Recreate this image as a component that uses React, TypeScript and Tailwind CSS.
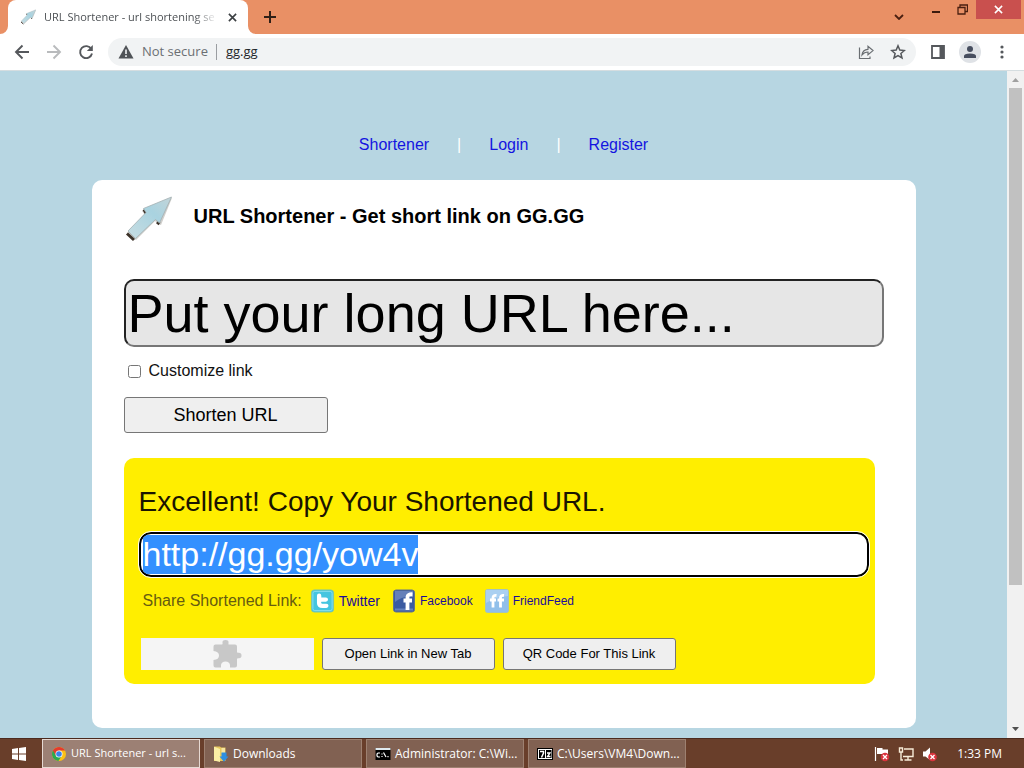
import { useEffect, useRef, type ReactNode } from "react";

function ArrowLogo({ className }: { className: string }) {
  return (
    <svg viewBox="0 0 48 46" className={className} aria-hidden="true">
      <defs>
        <linearGradient id="arrowFill" x1="0" y1="1" x2="1" y2="0">
          <stop offset="0" stopColor="#c8dde2" />
          <stop offset="0.6" stopColor="#a9d3e0" />
          <stop offset="1" stopColor="#c3d4d8" />
        </linearGradient>
      </defs>
      <path d="M3 37 L21 19 L18 15 L20 13 L48 2 L37 29 L34 28 L31 25 L12 44 Z" fill="#8a8780" opacity="0.4" />
      <path d="M3 37.500 L10 44 M20 13.500 L22.500 18 M33 26 L35.500 28" stroke="#3c3229" strokeWidth="3" fill="none" />
      <path d="M4 35 L22 16.500 L19.500 12.500 L47.500 1 L35.500 27 L31.500 23.500 L11.500 42.500 Z" fill="url(#arrowFill)" stroke="#a3b0b2" strokeWidth="0.8" />
    </svg>
  );
}

function ChromeLogo() {
  return (
    <svg viewBox="0 0 16 16" className="size-4 shrink-0" aria-hidden="true">
      <circle cx="8" cy="8" r="7" fill="#fbc116" />
      <path d="M1.940 4.500 A7 7 0 0 0 7.400 14.970 L10.900 9.700 L8 8 Z" fill="#2da94f" />
      <path d="M1.940 4.500 A7 7 0 0 1 14.060 4.500 H8 L5 9.700 Z" fill="#e33b2e" />
      <circle cx="8" cy="8" r="3.500" fill="#fff" />
      <circle cx="8" cy="8" r="2.800" fill="#3c82e8" />
    </svg>
  );
}

function FolderIcon() {
  return (
    <svg viewBox="0 0 16 16" className="size-4 shrink-0" aria-hidden="true">
      <path d="M1 0.500 H7 L8 1.500 H12.500 V15 H1 Z" fill="#e8c85c" />
      <path d="M2 1 L7 3 V16 L1 14.500 V1 Z" fill="#fbeea5" />
      <path d="M8.500 2 H12 V7 H8.500 Z" fill="#f7e6a0" />
      <path d="M8.500 6.500 H13.500 V10.500 H15.500 L11 15.800 L6.500 10.500 H8.500 Z" fill="#2d8fe0" />
    </svg>
  );
}

function ConsoleIcon() {
  return (
    <svg viewBox="0 0 16 16" className="size-4 shrink-0" aria-hidden="true">
      <rect x="0.500" y="2" width="15" height="12" fill="#000" />
      <rect x="0.500" y="2" width="15" height="2" fill="#dfe9ee" />
      <path d="M5 7 H3 L2 8 V10 L3 11 H5 M7 7.500 V8.500 M7 10 V11 M8.500 6.500 L11 11 M13 10 V11.200" stroke="#fff" strokeWidth="1.200" fill="none" />
    </svg>
  );
}

function SevenZipIcon() {
  return (
    <svg viewBox="0 0 16 16" className="size-4 shrink-0" aria-hidden="true">
      <rect x="0.500" y="2.500" width="15" height="11" fill="#fff" stroke="#000" />
      <path d="M2 4 H8 V12 H2 Z M9 4 H14.500 V12 H9 Z" fill="#000" />
      <path d="M3 5.500 H6.500 V7 L4.500 11.500" stroke="#fff" strokeWidth="1.500" fill="none" />
      <path d="M10 7 H13 L10.500 10.500 H13.500" stroke="#fff" strokeWidth="1.300" fill="none" />
    </svg>
  );
}

function TabStrip() {
  return (
    <header className="flex h-[34px] items-end bg-[#e99065] pl-2">
      <div className="relative flex h-full w-60 items-center rounded-t-lg bg-white pr-2 pl-3">
        <svg viewBox="0 0 8 8" className="absolute bottom-0 -left-2 size-2" aria-hidden="true">
          <path d="M8 0 V8 H0 A8 8 0 0 0 8 0" fill="#fff" />
        </svg>
        <svg viewBox="0 0 8 8" className="absolute -right-2 bottom-0 size-2" aria-hidden="true">
          <path d="M0 0 V8 H8 A8 8 0 0 1 0 0" fill="#fff" />
        </svg>
        <ArrowLogo className="size-4" />
        <span className="ml-2 bg-linear-to-r from-[#45494d] from-88% to-[#45494d]/10 bg-clip-text text-[11px] whitespace-nowrap text-transparent">
          URL Shortener - url shortening se
        </span>
        <button aria-label="Close tab" className="ml-auto flex size-4 items-center justify-center">
          <svg viewBox="0 0 10 10" className="size-[9px]"><path d="M1 1 L9 9 M9 1 L1 9" stroke="#3c4043" strokeWidth="1.800" /></svg>
        </button>
      </div>
      <button aria-label="New tab" className="ml-3 flex size-5 items-center justify-center self-center">
        <svg viewBox="0 0 12 12" className="size-3"><path d="M6 0 V12 M0 6 H12" stroke="#2f1f17" strokeWidth="2" /></svg>
      </button>
      <div className="ml-auto flex h-full items-start pr-[3px]">
        <button aria-label="Search tabs" className="mr-2 flex h-full w-8 items-center justify-center">
          <svg viewBox="0 0 10 6" className="h-1.5 w-2.5"><path d="M1 1 L5 5 L9 1" stroke="#4a1f10" strokeWidth="1.800" fill="none" /></svg>
        </button>
        <button aria-label="Minimize" className="flex h-5 w-[26px] justify-center pt-[11px]">
          <span className="h-0.5 w-2 bg-[#3b1b0e]" />
        </button>
        <button aria-label="Restore" className="mr-px flex h-[18px] w-[26px] items-center justify-center">
          <svg viewBox="0 0 11 11" className="size-[11px]"><path d="M1 3.500 H8 V10 H1 Z M3 3 V1 H10.500 V7.500 H8.500" stroke="#4a1f10" strokeWidth="1.300" fill="none" /></svg>
        </button>
        <button aria-label="Close" className="flex h-[19px] w-[45px] items-center justify-center bg-[#c9504e]">
          <svg viewBox="0 0 10 10" className="size-[9px]"><path d="M1 1 L9 9 M9 1 L1 9" stroke="#fff" strokeWidth="1.700" /></svg>
        </button>
      </div>
    </header>
  );
}

function Toolbar() {
  return (
    <div className="flex h-[37px] items-center border-b border-[#d5dde0] bg-white pr-3.5 pl-3.5 text-[#55585c]">
      <button aria-label="Back" className="size-4">
        <svg viewBox="0 0 16 16"><path d="M15 8 H2 M8.500 1.500 L2 8 L8.500 14.500" stroke="#55585c" strokeWidth="1.900" fill="none" /></svg>
      </button>
      <button aria-label="Forward" className="ml-4 size-4">
        <svg viewBox="0 0 16 16"><path d="M1 8 H14 M7.500 1.500 L14 8 L7.500 14.500" stroke="#b9bbbd" strokeWidth="1.900" fill="none" /></svg>
      </button>
      <button aria-label="Reload" className="mr-3.5 ml-4 size-4">
        <svg viewBox="0 0 16 16"><path d="M13.300 5 A6 6 0 1 0 14 9.500" stroke="#55585c" strokeWidth="1.900" fill="none" /><path d="M14.800 1 V7 H8.800 Z" fill="#55585c" /></svg>
      </button>
      <div className="flex h-7 min-w-0 flex-1 items-center rounded-full bg-[#f1f3f4] pr-2.5 pl-2.5 text-[13px]">
        <svg viewBox="0 0 16 16" className="size-4 shrink-0" aria-hidden="true"><path d="M8 1 L15.500 14.500 H0.500 Z" fill="#4f5357" /><path d="M8 5.500 V10 M8 11.200 V13" stroke="#f1f3f4" strokeWidth="1.600" /></svg>
        <span className="ml-2 whitespace-nowrap text-[#6b6f73]">Not secure</span>
        <span className="mr-[9px] ml-2 h-4 w-px bg-[#9a9da1]" />
        <input aria-label="Address" defaultValue="gg.gg" className="min-w-0 flex-1 bg-transparent text-[#24272a] outline-none" />
        <button aria-label="Share page" className="mr-4 size-4">
          <svg viewBox="0 0 16 16"><path d="M1.500 3.500 V14.500 H12 V12.500 M4 11 C4.300 7.500 6.500 5.500 10 5.300 V2.300 L15 6.600 L10 10.700 V8 C7.500 8 5.500 9 4 11 Z" stroke="#6a6e72" strokeWidth="1.200" fill="none" /></svg>
        </button>
        <button aria-label="Bookmark" className="size-4">
          <svg viewBox="0 0 16 16"><path d="M8 1.800 L9.800 6.100 L14.400 6.500 L10.900 9.500 L12 14 L8 11.600 L4 14 L5.100 9.500 L1.600 6.500 L6.200 6.100 Z" stroke="#55585c" strokeWidth="1.500" fill="none" /></svg>
        </button>
      </div>
      <button aria-label="Side panel" className="ml-3.5 size-4">
        <svg viewBox="0 0 16 16"><path d="M2 2 H14 V14 H2 Z" stroke="#55585c" strokeWidth="1.800" fill="none" /><path d="M9.500 2 H14 V14 H9.500 Z" fill="#55585c" /></svg>
      </button>
      <button aria-label="Profile" className="ml-[13px] size-[22px] rounded-full bg-[#dfe2e6] p-[3px]">
        <svg viewBox="0 0 16 16"><circle cx="8" cy="5" r="3" fill="#474e5f" /><path d="M2 14 V12 Q2 9.500 8 9.500 Q14 9.500 14 12 V14 Z" fill="#474e5f" /></svg>
      </button>
      <button aria-label="Menu" className="ml-[13px] size-4">
        <svg viewBox="0 0 16 16" fill="#55585c"><circle cx="8" cy="3" r="1.600" /><circle cx="8" cy="8" r="1.600" /><circle cx="8" cy="13" r="1.600" /></svg>
      </button>
    </div>
  );
}

function ShareLink({ label, icon, small }: { label: string; icon: ReactNode; small?: boolean }) {
  return (
    <a href="#share" className={small ? "flex items-center gap-1 text-[12px] text-[#1b0b9a]" : "flex items-center gap-1 text-[14px] text-[#1b0b9a]"}>
      {icon}
      {label}
    </a>
  );
}

function ShortLinkPanel() {
  const shortUrl = useRef<HTMLInputElement>(null);
  useEffect(() => {
    shortUrl.current?.focus();
    shortUrl.current?.select();
  }, []);

  return (
    <section className="mt-[25px] mr-[9px] rounded-[10px] bg-[#ffee00] pt-6 pr-1.5 pb-3.5 pl-[15px]">
      <h2 className="text-[28px] leading-10 text-[#1a1400]">Excellent! Copy Your Shortened URL.</h2>
      <input
        ref={shortUrl}
        aria-label="Shortened URL"
        readOnly
        defaultValue="http://gg.gg/yow4v"
        className="mt-2.5 block h-[45px] w-full rounded-[12px] border-2 border-black bg-white px-0.5 text-[34px] leading-[39px] text-black outline-1 outline-white selection:bg-[#3390ff] selection:text-white"
      />
      <div className="mt-3 flex h-6 items-center pl-1">
        <span className="text-[16px] whitespace-nowrap text-[#665c10]">Share Shortened Link:</span>
        <div className="ml-2 flex items-center gap-3">
          <ShareLink
            label="Twitter"
            icon={
              <svg viewBox="0 0 26 26" className="h-[26px] w-[25px]" aria-hidden="true">
                <rect x="1.500" y="1.500" width="23" height="23" rx="3" fill="#45c5e0" stroke="#7fc6a4" />
                <rect x="3" y="3" width="20" height="20" rx="2" fill="none" stroke="#8be0ee" />
                <path d="M9.500 7.500 V15 Q9.500 18 13 18 H17 M10 11.500 H16.500" stroke="#fff" strokeWidth="4.500" strokeLinecap="round" fill="none" />
                <path d="M12 14.700 H19" stroke="#45c5e0" strokeWidth="1" />
              </svg>
            }
          />
          <ShareLink
            small
            label="Facebook"
            icon={
              <svg viewBox="0 0 24 26" className="h-[26px] w-6" aria-hidden="true">
                <rect x="1.500" y="2" width="21" height="22" rx="2.500" fill="#3b5ba1" stroke="#62738a" />
                <path d="M3 3 H21 V9 Q10 8 3 14 Z" fill="#6580b9" />
                <path d="M3 21.500 H21" stroke="#7f9bd0" strokeWidth="2" opacity="0.6" />
                <path d="M15.500 22 V9 Q15.500 6 20.500 6.300 M11.500 12.500 H20" stroke="#fff" strokeWidth="3.800" fill="none" />
              </svg>
            }
          />
          <ShareLink
            small
            label="FriendFeed"
            icon={
              <svg viewBox="0 0 24 26" className="h-[26px] w-6" aria-hidden="true">
                <rect x="0.500" y="1.500" width="23" height="23" rx="2" fill="#90bfea" stroke="#a4c4bd" />
                <path d="M1 2 H23 V8 Q10 9 1 15 Z" fill="#aad0f1" />
                <path d="M8 19.500 V10 Q8 7 11.500 7.500 M5 12 H11 M15.500 19.500 V10 Q15.500 7 19 7.500 M12.500 12 H19" stroke="#fff" strokeWidth="2.800" fill="none" />
              </svg>
            }
          />
        </div>
      </div>
      <div className="mt-[25px] flex gap-2 pl-0.5 text-[13px] text-black">
        <div className="flex h-8 w-[173px] items-center justify-center bg-[#f5f5f5]">
          <svg viewBox="0 0 29 28" className="h-7 w-[29px]" role="img" aria-label="Plugin unavailable">
            <path d="M0.500 6.500 Q0.500 4.500 2.500 4.500 H9 Q10 4 9.500 3 Q9 0 12.500 0 Q16 0 15.500 3 Q15 4.500 16 4.500 H22 Q24 4.500 24 6.500 V12 Q24 13 25.500 12.700 Q28.500 12.500 28.500 15.500 Q28.500 18.500 25.500 18.200 Q24 18 24 19 V25.500 Q24 27.500 22 27.500 H17 V25 Q16.500 21.500 12.500 21.500 Q8.500 21.500 8 25 V27.500 H2.500 Q0.500 27.500 0.500 25.500 V20 Q6 19.500 6 15.500 Q6 11.500 0.500 11 Z" fill="#c8c8c8" />
          </svg>
        </div>
        <button className="h-8 w-[173px] rounded-[3px] border border-[#767676] bg-[#efefef]">Open Link in New Tab</button>
        <button className="h-8 w-[173px] rounded-[3px] border border-[#767676] bg-[#efefef]">QR Code For This Link</button>
      </div>
    </section>
  );
}

function Page() {
  return (
    <main className="min-w-0 flex-1 bg-[#b7d6e2] px-10 pt-16 pb-2.5 font-['Liberation_Sans',Arial,sans-serif]">
      <nav className="flex justify-center gap-7 text-[16px] leading-5 text-[#1414e0]">
        <a href="#shortener">Shortener</a>
        <span className="text-white">|</span>
        <a href="#login">Login</a>
        <span className="text-white">|</span>
        <a href="#register">Register</a>
      </nav>
      <div className="mx-auto mt-[25px] max-w-[824px] rounded-[10px] bg-white px-8 pt-4 pb-11">
        <div className="flex h-[46px] items-center gap-[22px]">
          <ArrowLogo className="h-[46px] w-12" />
          <h1 className="pb-1.5 text-[20px] font-bold text-black">URL Shortener - Get short link on GG.GG</h1>
        </div>
        <input
          aria-label="Long URL"
          defaultValue="Put your long URL here..."
          className="mt-[37px] block h-[68px] w-full rounded-[10px] border-2 border-t-[#222] border-r-[#767676] border-b-[#767676] border-l-[#222] bg-[#e6e6e6] px-0.5 text-[54px] leading-[62px] text-black"
        />
        <label className="mt-3.5 ml-1 flex h-5 w-fit items-center gap-2 text-[16px] text-[#111]">
          <input type="checkbox" className="size-[13px]" />
          Customize link
        </label>
        <button className="mt-4 block h-9 w-[204px] rounded-[3px] border border-[#767676] bg-[#efefef] text-[18px] text-black">
          Shorten URL
        </button>
        <ShortLinkPanel />
      </div>
    </main>
  );
}

function Scrollbar() {
  return (
    <div className="flex w-[17px] flex-col items-center bg-[#f1f1f1]" aria-hidden="true">
      <svg viewBox="0 0 17 17" className="size-[17px] shrink-0"><path d="M5 11 L8.500 7 L12 11 Z" fill="#a0a0a0" /></svg>
      <div className="flex w-[13px] flex-1 flex-col">
        <div className="h-[78.5%] bg-[#c1c1c1]" />
      </div>
      <svg viewBox="0 0 17 17" className="size-[17px] shrink-0"><path d="M5 6 L8.500 10 L12 6 Z" fill="#505050" /></svg>
    </div>
  );
}

const tasks = [
  { label: "URL Shortener - url s...", icon: <ChromeLogo />, active: true },
  { label: "Downloads", icon: <FolderIcon />, active: false },
  { label: "Administrator: C:\\Wi...", icon: <ConsoleIcon />, active: false },
  { label: "C:\\Users\\VM4\\Down...", icon: <SevenZipIcon />, active: false },
];

function Taskbar() {
  return (
    <footer className="flex h-[30px] items-center border-t border-[#4b2a1e] bg-[#693e2a] text-[12px] text-white">
      <button aria-label="Start" className="flex h-full w-[42px] items-center pl-3">
        <svg viewBox="0 0 14 14" className="size-3.5"><path d="M0 2 L6 1 V6.500 H0 Z M7 0.900 L14 0 V6.500 H7 Z M0 7.500 H6 V13 L0 12 Z M7 7.500 H14 V14 L7 13.100 Z" fill="#fff" /></svg>
      </button>
      <div className="flex h-full gap-1">
        {tasks.map((task) => (
          <button
            key={task.label}
            className={
              task.active
                ? "flex h-[29px] w-[158px] items-center gap-1 border border-[#e6d9d3] bg-[#9c8074] pl-2 text-[11px] whitespace-nowrap"
                : "flex h-[29px] w-[158px] items-center gap-1 border border-[#9d8070] bg-[#816152] pl-2 text-[12px] whitespace-nowrap"
            }
          >
            {task.icon}
            {task.label}
          </button>
        ))}
      </div>
      <div className="ml-auto flex items-center gap-2 pr-[22px]">
        <svg viewBox="0 0 16 16" className="size-4" role="img" aria-label="Action Center">
          <path d="M1.500 1 V15" stroke="#fff" strokeWidth="1.200" />
          <path d="M3 2 H8.500 V3.500 H14 V9.500 H8 V8 H3 Z" fill="#fff" />
          <circle cx="11" cy="11" r="4.300" fill="#d9343d" />
          <path d="M9 9 L13 13 M13 9 L9 13" stroke="#fff" strokeWidth="1.300" />
        </svg>
        <svg viewBox="0 0 16 16" className="size-4" role="img" aria-label="Network">
          <path d="M6 3 H15 V10.500 H5 M10 11 V13.500 M6.500 14 H13.500 M1.500 2 H4.500 V6 H1.500 Z M3 6 V14 H5" stroke="#f7ecd8" strokeWidth="1.400" fill="none" />
        </svg>
        <svg viewBox="0 0 16 16" className="size-4" role="img" aria-label="Volume muted">
          <path d="M1 5.500 H3.500 L8 1.500 V14 L3.500 10.500 H1 Z" fill="#fff" />
          <circle cx="10.500" cy="11" r="4.300" fill="#d9343d" />
          <path d="M8.500 9 L12.500 13 M12.500 9 L8.500 13" stroke="#fff" strokeWidth="1.300" />
        </svg>
        <time className="ml-[11px]">1:33 PM</time>
      </div>
    </footer>
  );
}

export default function App() {
  return (
    <div className="flex min-h-screen flex-col font-['Open_Sans','Noto_Sans',sans-serif]">
      <TabStrip />
      <Toolbar />
      <div className="flex flex-1">
        <Page />
        <Scrollbar />
      </div>
      <Taskbar />
    </div>
  );
}
